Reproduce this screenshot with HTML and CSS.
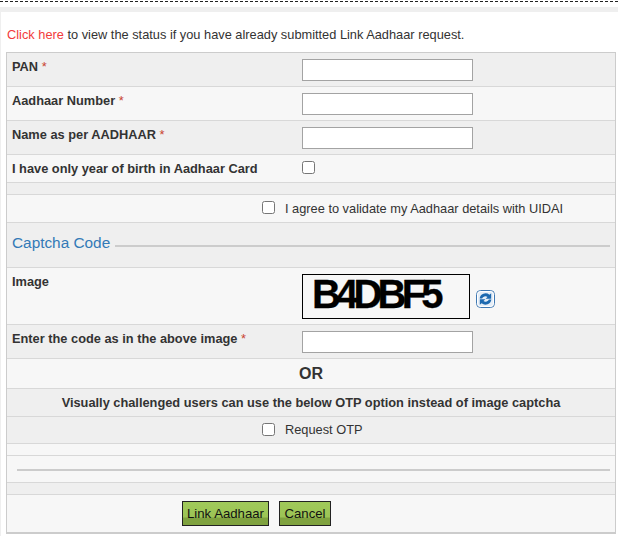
FILE: index.html
```html
<!DOCTYPE html>
<html lang="en">
<head>
  <meta charset="UTF-8" />
  <title>Link Aadhaar</title>
  <link rel="stylesheet" href="styles.css">
</head>
<body>
  <div class="topbar"></div>
  <div class="page">
    <p class="status"><a href="#">Click here</a> to view the status if you have already submitted Link Aadhaar request.</p>

    <div class="form">
      <div class="row odd h34">
        <label class="name">PAN <span class="req">*</span></label>
        <input type="text" class="field">
      </div>
      <div class="row even h34">
        <label class="name">Aadhaar Number <span class="req">*</span></label>
        <input type="text" class="field">
      </div>
      <div class="row odd h34">
        <label class="name">Name as per AADHAAR <span class="req">*</span></label>
        <input type="text" class="field">
      </div>
      <div class="row even h28">
        <label class="name">I have only year of birth in Aadhaar Card</label>
        <input type="checkbox" class="check">
      </div>
      <div class="row odd h12"></div>
      <div class="row even h28 agree">
        <input type="checkbox" class="check">
        <span class="check-text">I agree to validate my Aadhaar details with UIDAI</span>
      </div>
      <div class="row odd h45 legend">
        <span class="legend-title">Captcha Code</span>
        <span class="rule"></span>
      </div>
      <div class="row even h57">
        <label class="name">Image</label>
        <div class="captcha">B4DBF5</div>
        <svg class="refresh" viewBox="0 0 19 18" width="19" height="18">
          <rect x="0.5" y="0.5" width="18" height="17" rx="4" fill="#e6eef7" stroke="#3f78b2"/>
          <rect x="1.5" y="1.5" width="16" height="15" rx="3" fill="none" stroke="#fff"/>
          <path d="M3.6 8.6A6 6 0 0 1 13.4 4.8L15.2 3.2V8.8H9.6L11.5 6.9A3.6 3.6 0 0 0 6.1 8.6Z" fill="#1c69b0"/>
          <path d="M15.4 9.4A6 6 0 0 1 5.6 13.2L3.8 14.8V9.2H9.4L7.5 11.1A3.6 3.6 0 0 0 12.9 9.4Z" fill="#1c69b0"/>
        </svg>
      </div>
      <div class="row odd h34">
        <label class="name">Enter the code as in the above image <span class="req">*</span></label>
        <input type="text" class="field">
      </div>
      <div class="row even h30 center or">OR</div>
      <div class="row odd h28 center note">Visually challenged users can use the below OTP option instead of image captcha</div>
      <div class="row odd h27 agree otp">
        <input type="checkbox" class="check">
        <span class="check-text">Request OTP</span>
      </div>
      <div class="row even h12"></div>
      <div class="row even h27 hr-row"><span class="rule"></span></div>
      <div class="row odd h12"></div>
      <div class="row even h37 actions">
        <button type="button" class="btn btn-link">Link Aadhaar</button>
        <button type="button" class="btn btn-cancel">Cancel</button>
      </div>
    </div>
  </div>
</body>
</html>
```
FILE: styles.css
```css
* {
  box-sizing: border-box;
}
body {
  margin: 0;
  background: #fff;
  font-family: "Liberation Sans", Arial, sans-serif;
  font-size: 12.8px;
  color: #333;
}
.topbar {
  height: 12px;
  padding-top: 1px;
  background: linear-gradient(#fff 7px, #efefef 7px);
}
.topbar::before {
  content: "";
  display: block;
  border-top: 1px dashed #222;
}
.page {
  border-left: 1px solid #efefef;
  padding: 0 2px 4px 5px;
}
.status {
  margin: 0;
  padding: 15px 0 0 1px;
  height: 40px;
  line-height: 16px;
}
.status a {
  color: #f23b3b;
  text-decoration: none;
}
.form {
  width: 610px;
  border: 1px solid #ccc;
  border-bottom-width: 2px;
}
.row {
  display: flex;
  align-items: flex-start;
  border-bottom: 1px solid #d8d8d8;
}
.row:last-child {
  border-bottom: 0;
}
.odd { background: #efefef; }
.even { background: #f7f7f7; }
.h12 { height: 12px; }
.h27 { height: 27px; }
.h28 { height: 28px; }
.h30 { height: 30px; }
.h34 { height: 34px; }
.h37 { height: 37px; }
.h45 { height: 45px; }
.h57 { height: 57px; }
.name {
  width: 295px;
  padding: 7px 0 0 5px;
  font-weight: bold;
  line-height: 14px;
}
.req {
  color: #c9432f;
  font-weight: normal;
}
.field {
  width: 171px;
  height: 22px;
  margin: 6px 0 0;
  padding: 0 4px;
  border: 1px solid #a3a3a3;
  background: #fff;
}
.check {
  width: 13px;
  height: 13px;
  margin: 6px 0 0;
}
.agree {
  padding-left: 255px;
}
.check-text {
  margin: 6px 0 0 10px;
  line-height: 16px;
}
.otp .check-text {
  margin-top: 5px;
}
.legend {
  padding: 11px 5px 0 5px;
}
.legend-title {
  font-size: 15.36px;
  line-height: 18px;
  color: #337ab7;
}
.rule {
  flex: 1;
  height: 2px;
  background: #ccc;
}
.legend .rule {
  margin: 11px 0 0 5px;
}
.captcha {
  width: 168px;
  height: 45px;
  margin: 6px 0 0;
  padding-left: 9px;
  border: 1px solid #000;
  font-size: 40px;
  font-weight: bold;
  line-height: 39px;
  letter-spacing: -4.8px;
  color: #000;
  -webkit-text-stroke: 0.3px #000;
}
.refresh {
  margin: 22px 0 0 6px;
}
.center {
  justify-content: center;
  font-weight: bold;
}
.or {
  font-size: 16px;
  line-height: 29px;
}
.note {
  line-height: 28px;
}
.hr-row {
  padding: 13px 5px 0 10px;
}
.actions {
  padding: 6px 0 0 175px;
  gap: 10px;
}
.btn {
  height: 25px;
  padding: 0;
  border: 1px solid #222;
  background: linear-gradient(#a0c95a 0, #9cc455 65%, #7fa23f 70%, #7fa23f 100%);
  font-family: inherit;
  font-size: 13.2px;
  color: #111;
}
.btn-link { width: 87px; }
.btn-cancel { width: 52px; }
```
